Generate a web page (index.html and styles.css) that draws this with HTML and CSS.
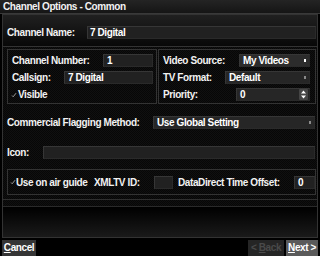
FILE: index.html
```
<!DOCTYPE html>
<html lang="en">
<head>
    <meta charset="UTF-8">
    <title>Channel Options - Common</title>
    <link rel="stylesheet" href="styles.css">
</head>
<body>
    <div class="titlebar">Channel Options - Common</div>

    <div class="panel">
        <div class="name-row">
            <span class="label">Channel Name:</span>
            <span class="field w-name">7 Digital</span>
        </div>

        <div class="groups">
            <div class="group group-left">
                <div class="row"><span>Channel Number:</span><span class="field w-num">1</span></div>
                <div class="row"><span>Callsign:</span><span class="field w-call">7 Digital</span></div>
                <div class="row">
                    <svg class="check" width="6" height="6" viewBox="0 0 6 6"><path d="M1 3.5 L2.2 4.8 L5 1.2" fill="none" stroke="#9a9a9a" stroke-width="1"/></svg>
                    <span>Visible</span>
                </div>
            </div>
            <div class="group group-right">
                <div class="row"><span>Video Source:</span><span class="field select focus w-source">My Videos<i class="arrow"></i></span></div>
                <div class="row"><span>TV Format:</span><span class="field select w-format">Default<i class="arrow"></i></span></div>
                <div class="row">
                    <span>Priority:</span>
                    <span class="field select w-prio">0
                        <svg class="spin" width="9" height="11" viewBox="0 0 9 11"><rect width="9" height="11" rx="1" fill="#454545"/><path d="M4.5 1.5 L7 4.5 H2 Z M4.5 9.5 L7 6.5 H2 Z" fill="#fff"/></svg>
                    </span>
                </div>
            </div>
        </div>

        <div class="line-row flagging">
            <span>Commercial Flagging Method:</span>
            <span class="field select w-flag">Use Global Setting<i class="arrow"></i></span>
        </div>

        <div class="line-row icon-row">
            <span>Icon:</span>
            <span class="field w-icon"></span>
        </div>

        <div class="group guide">
            <svg class="check" width="6" height="6" viewBox="0 0 6 6"><path d="M1 3.5 L2.2 4.8 L5 1.2" fill="none" stroke="#9a9a9a" stroke-width="1"/></svg>
            <span class="w-guide">Use on air guide</span>
            <span class="w-xmltv">XMLTV ID:</span>
            <span class="field w-xid"></span>
            <span class="w-dd">DataDirect Time Offset:</span>
            <span class="field w-off">0</span>
        </div>

        <div class="sep"></div>
        <div class="fill"></div>
    </div>

    <div class="buttons">
        <span class="btn cancel"><u>C</u>ancel</span>
        <span class="btn back">&lt; <u>B</u>ack</span>
        <span class="btn next"><u>N</u>ext &gt;</span>
    </div>
</body>
</html>
```

FILE: styles.css
```
body {
    margin: 0;
    width: 320px;
    height: 256px;
    overflow: hidden;
    background: #000;
    color: #f2f2f2;
    font: bold 10px "Liberation Sans", Arial, sans-serif;
    letter-spacing: -0.4px;
}

.titlebar {
    height: 13px;
    line-height: 13px;
    padding-left: 3px;
    background: linear-gradient(#242424, #151515);
    border-bottom: 1px solid #393939;
}

.panel {
    margin: 0 2px;
    height: 224px;
    box-sizing: border-box;
    border: 1px solid #333;
    display: flex;
    flex-direction: column;
    background-color: #090909;
    background-image: repeating-conic-gradient(#101010 0 25%, #070707 0 50%);
    background-size: 2px 2px;
}

.name-row {
    height: 32px;
    box-sizing: border-box;
    padding: 4px 1px 0 4px;
    display: flex;
    align-items: center;
    border-bottom: 1px solid #333;
    background: linear-gradient(#202020, #080808);
}

.field {
    height: 13px;
    line-height: 13px;
    box-sizing: border-box;
    padding: 0 3px;
    margin-left: auto;
    background: #212121;
    border: 1px solid #363636;
    border-right-color: #2a2a2a;
    border-bottom-color: #2a2a2a;
    color: #fff;
    line-height: 11px;
}

.select {
    display: flex;
    align-items: center;
    background: #262626;
}

.select.focus {
    background: #2c2c2c;
}

.arrow {
    width: 2px;
    height: 3px;
    margin-left: auto;
    margin-right: 0;
    background: #8a8a8a;
}

.focus .arrow {
    background: #fff;
}

.spin {
    margin-left: auto;
    margin-right: -2px;
}

.groups {
    display: flex;
    gap: 1px;
    margin: 2px 0 0 4px;
}

.group {
    box-sizing: border-box;
    border: 1px solid #333;
}

.group-left,
.group-right {
    height: 55px;
    display: flex;
    flex-direction: column;
    gap: 4px;
}

.group-left {
    width: 150px;
    padding: 4px 3px 0 4px;
}

.group-right {
    width: 158px;
    padding: 4px 5px 0 4px;
}

.row {
    height: 13px;
    display: flex;
    align-items: center;
}

.check {
    margin: 0 1px 0 -1px;
}

.w-name { width: 229px; padding-left: 2px; }
.w-num { width: 50px; }
.w-call { width: 89px; }
.w-source { width: 71px; }
.w-format { width: 85px; }
.w-prio { width: 74px; }
.w-flag { width: 162px; }
.w-icon { width: 272px; }

.line-row {
    height: 13px;
    display: flex;
    align-items: center;
    padding: 0 2px 0 4px;
}

.flagging { margin-top: 12px; }
.icon-row { margin-top: 17px; }

.guide {
    height: 26px;
    margin: 10px 1px 0 4px;
    padding-left: 2px;
    display: flex;
    align-items: center;
}

.guide .check { margin: 0; }

.w-guide { width: 78px; }
.w-xmltv { width: 60px; }
.w-xid { width: 19px; margin: 0 5px 0 0; }
.w-dd { width: 116px; }
.w-off { width: 21px; margin: 0; }

.sep {
    margin-top: 4px;
    height: 8px;
    box-sizing: border-box;
    border-top: 1px solid #2f2f2f;
    border-bottom: 1px solid #2a2a2a;
}

.fill {
    flex: 1;
    background: linear-gradient(#000, #1a1a1a);
}

.buttons {
    margin-top: 2px;
    padding: 0 2px;
    display: flex;
    gap: 2px;
}

.btn {
    height: 16px;
    line-height: 16px;
    text-align: center;
    box-sizing: border-box;
}

.cancel {
    width: 34px;
    background: #353535;
    color: #fff;
}

.back {
    width: 36px;
    margin-left: auto;
    background: #252525;
    color: #4a4a4a;
}

.next {
    width: 32px;
    background: #5a5a5a;
    color: #fff;
}
```
